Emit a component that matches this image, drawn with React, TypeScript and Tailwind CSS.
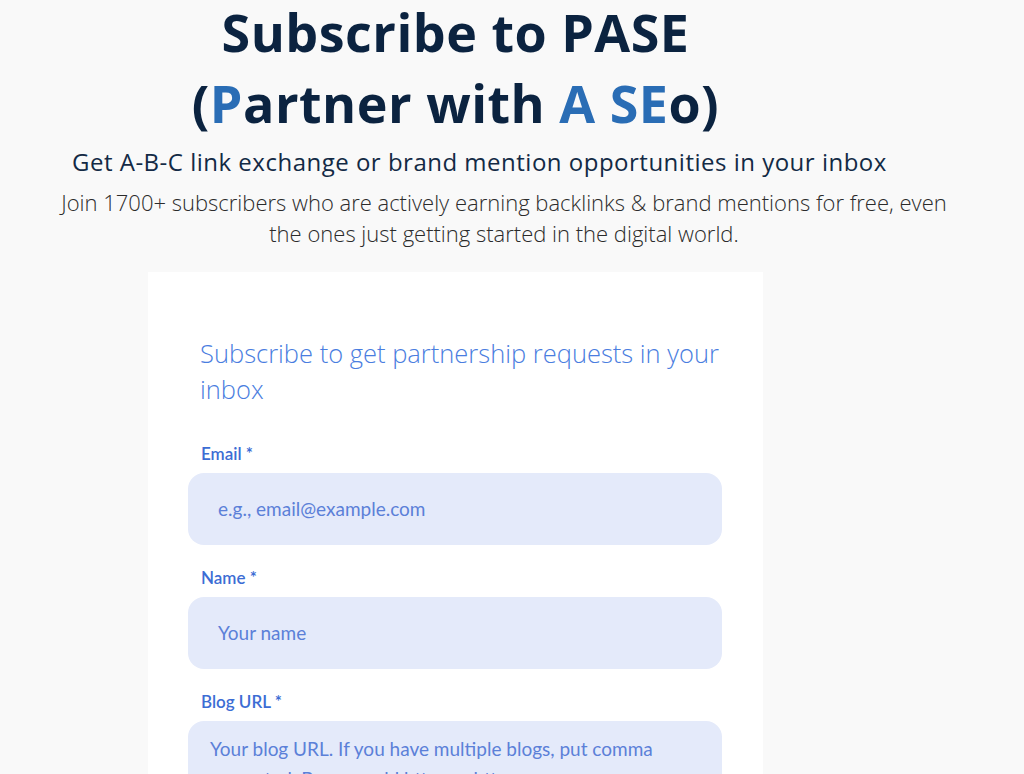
const heading = { fontFamily: '"Open Sans", "Liberation Sans", sans-serif' }
const body = { fontFamily: '"Open Sans", Lato, sans-serif' }
const label = { fontFamily: 'Lato, "Open Sans", sans-serif' }

function Field({ label: text, placeholder, tall }: { label: string; placeholder: string; tall?: boolean }) {
  return (
    <div className="flex flex-col">
      <label className="ml-[13px] text-[17px] font-semibold text-[#3c6dd4] leading-[20px]" style={label}>
        {text} *
      </label>
      {tall ? (
        <div className="mt-[9px] h-[120px] rounded-[16px] bg-[#e4eafa] px-[22px] pt-[13px] text-[19px] leading-[30px] text-[#5b80d8]" style={label}>
          Your blog URL. If you have multiple blogs, put comma separated. Be sure add https or http
        </div>
      ) : (
        <div className="mt-[9px] flex h-[72px] items-center rounded-[16px] bg-[#e4eafa] px-[30px] text-[19px] text-[#5b80d8]" style={label}>
          {placeholder}
        </div>
      )}
    </div>
  )
}

export default function App() {
  return (
    <div className="h-[774px] w-[1024px] overflow-hidden bg-[#f9f9f9]">
      <div className="ml-[148px] w-[615px] text-center text-[#0b2340]" style={heading}>
        <h1 className="text-[52px] font-bold leading-[64px] tracking-[0.5px]">Subscribe to PASE</h1>
        <h1 className="text-[52px] font-bold leading-[78px] tracking-[0.5px]">
          (<span className="text-[#2a6db5]">P</span>artner with <span className="text-[#2a6db5]">A SE</span>o)
        </h1>
      </div>
      <p className="ml-[72px] mt-[3px] text-[24px] leading-[34px] tracking-[0.5px] text-[#132a45]" style={body}>
        Get A-B-C link exchange or brand mention opportunities in your inbox
      </p>
      <p className="ml-[54px] mt-[8px] w-[900px] text-center text-[22px] font-light leading-[31px] text-[#2b2b2b]" style={body}>
        Join 1700+ subscribers who are actively earning backlinks &amp; brand mentions for free, even the ones just
        getting started in the digital world.
      </p>
      <div className="ml-[148px] mt-[23px] w-[615px] bg-white pl-[40px] pr-[41px] pt-[63px] pb-[40px]">
        <h2 className="pl-[12px] text-[25.5px] font-light leading-[36px] text-[#4a7de0]" style={body}>
          Subscribe to get partnership requests in your inbox
        </h2>
        <div className="mt-[37px] flex flex-col gap-[23px]">
          <Field label="Email" placeholder="e.g., email@example.com" />
          <Field label="Name" placeholder="Your name" />
          <Field label="Blog URL" placeholder="" tall />
        </div>
      </div>
    </div>
  )
}
